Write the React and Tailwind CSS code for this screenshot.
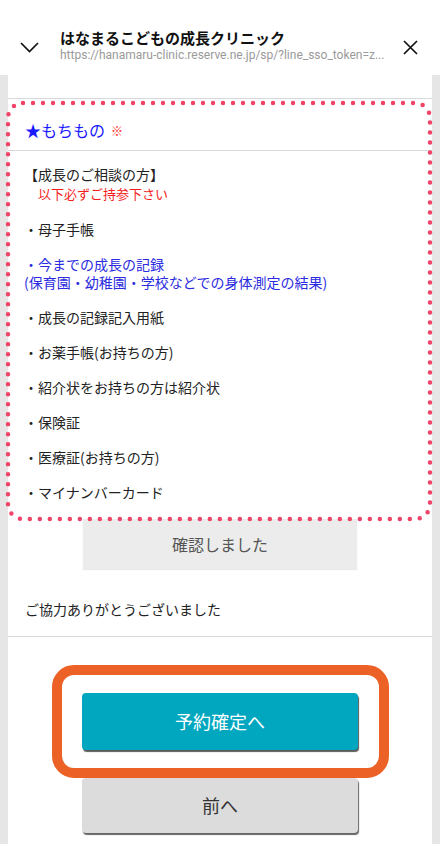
import React from "react";

const jp = { fontFamily: '"Noto Sans CJK JP", "Noto Sans", sans-serif' };

export default function App() {
  const items = [
    "・成長の記録記入用紙",
    "・お薬手帳(お持ちの方)",
    "・紹介状をお持ちの方は紹介状",
    "・保険証",
    "・医療証(お持ちの方)",
    "・マイナンバーカード",
  ];
  return (
    <div
      className="w-[440px] h-[844px] overflow-hidden bg-white flex flex-col font-['Noto_Sans_CJK_JP',sans-serif]"
      style={jp}
    >
      {/* Header */}
      <div className="h-[75px] shrink-0 flex items-start bg-white">
        <svg className="mt-[42px] ml-[20px] shrink-0" width="19" height="11" viewBox="0 0 19 11">
          <path d="M1 1 L9.5 9.5 L18 1" fill="none" stroke="#111" strokeWidth="1.7" />
        </svg>
        <div className="ml-[21px] mt-[28px] flex flex-col min-w-0">
          <div className="text-[15px] leading-[20px] font-bold text-[#111] whitespace-nowrap">
            はなまるこどもの成長クリニック
          </div>
          <div className="text-[12px] leading-[14px] text-[#9a9a9a] whitespace-nowrap font-['Roboto',sans-serif]">
            https://hanamaru-clinic.reserve.ne.jp/sp/?line_sso_token=z...
          </div>
        </div>
        <svg className="mt-[40px] ml-auto mr-[22px] shrink-0" width="15" height="15" viewBox="0 0 15 15">
          <path d="M1 1 L14 14 M14 1 L1 14" fill="none" stroke="#111" strokeWidth="1.7" />
        </svg>
      </div>

      {/* Body */}
      <div className="flex-1 flex bg-[#e6e6e6] px-[8px]">
        <div className="flex-1 bg-white flex flex-col">
          <div className="h-[23px] shrink-0" />
          <div className="relative border-t border-[#dadada]">
            <div className="h-[52px] pt-[21px] pl-[17px] flex items-start text-[16px] leading-[20px] text-[#1a1aff] border-b border-[#dadada]">
              <span>★もちもの</span>
              <span className="text-[12px] leading-[22px] font-bold text-[#ff1a1a] ml-[6px]">※</span>
            </div>
            <div className="pt-[14px] pb-[18px] pl-[16px] flex flex-col gap-[17px] text-[14px] leading-[18px] text-[#222]">
              <div className="leading-[19px]">
                <div>【成長のご相談の方】</div>
                <div className="pl-[14px] text-[13px] text-[#f51d1d]">以下必ずご持参下さい</div>
              </div>
              <div>・母子手帳</div>
              <div className="text-[#2a2ae0]">
                <div>・今までの成長の記録</div>
                <div>(保育園・幼稚園・学校などでの身体測定の結果)</div>
              </div>
              {items.map((t) => (
                <div key={t}>{t}</div>
              ))}
            </div>
            <div className="mx-auto w-[274px] h-[50px] bg-[#ececec] shadow-[0_1px_1px_rgba(0,0,0,0.08)] flex items-center justify-center text-[16px] text-[#555]">
              確認しました
            </div>
            <svg
              className="absolute left-[-4px] top-0 pointer-events-none"
              width="430"
              height="424"
              viewBox="0 0 430 424"
            >
              <rect
                x="4"
                y="4"
                width="422"
                height="416"
                rx="15"
                fill="none"
                stroke="#ef4468"
                strokeWidth="4.5"
                strokeLinecap="round"
                strokeDasharray="0 10"
              />
            </svg>
          </div>

          <div className="mt-[30px] pb-[17px] pl-[17px] text-[14px] leading-[20px] text-[#222] border-b border-[#dadada]">
            ご協力ありがとうございました
          </div>

          <div className="mt-[28px] mx-auto w-[337px] h-[113px] shrink-0 border-[10px] border-[#ec6125] rounded-[22px] flex items-center justify-center">
            <div className="w-[276px] h-[57px] bg-[#00a7bf] rounded-[4px] shadow-[1px_2px_1px_rgba(0,0,0,0.65)] flex items-center justify-center text-[18px] text-white">
              予約確定へ
            </div>
          </div>
          <div className="mx-auto w-[276px] h-[55px] shrink-0 bg-[#dcdcdc] rounded-[4px] shadow-[1px_2px_1px_rgba(0,0,0,0.6)] flex items-center justify-center text-[18px] text-[#333]">
            前へ
          </div>
        </div>
      </div>
    </div>
  );
}
